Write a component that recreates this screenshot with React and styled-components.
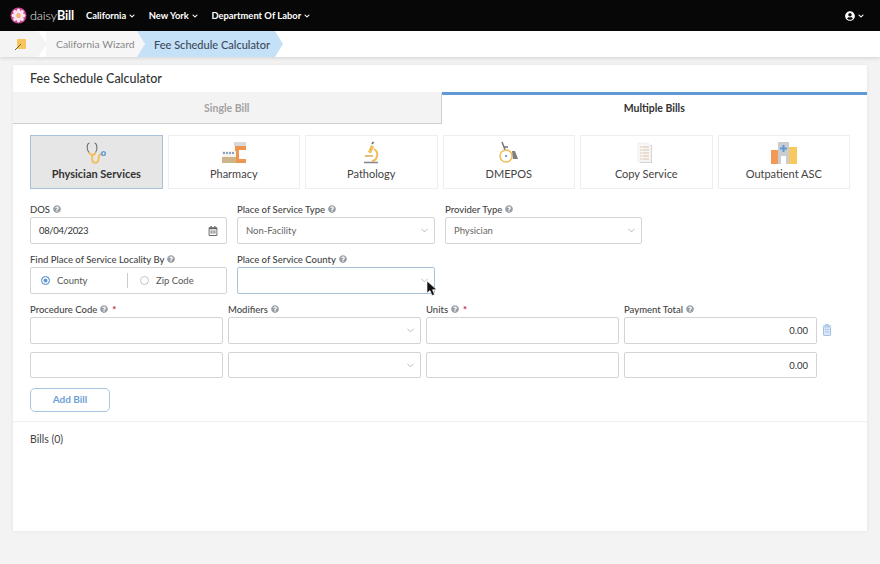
import React from "react";
import styled, { createGlobalStyle } from "styled-components";
import { FaChevronDown, FaUserCircle, FaQuestionCircle, FaRegCalendarAlt } from "react-icons/fa";
import { LuChevronDown } from "react-icons/lu";

const GlobalStyle = createGlobalStyle`
  html, body {
    margin: 0;
    height: 100%;
    overflow: hidden;
    background: #f3f3f3;
    font-family: "Lato", "Open Sans", sans-serif;
    color: #333;
  }
  * { box-sizing: border-box; }
`;

const Page = styled.div`
  width: 880px;
  height: 564px;
  display: flex;
  flex-direction: column;
`;

const TopBar = styled.header`
  height: 31px;
  background: #070707;
  display: flex;
  align-items: center;
  padding: 0 16px 0 10px;
  color: #fff;
`;

const Logo = styled.div`
  display: flex;
  align-items: center;
  gap: 3px;
  width: 76px;
  font-size: 12.6px;
  font-weight: 300;
  letter-spacing: -0.1px;
  color: #e8e8e8;
  b { font-weight: 700; color: #fff; }
`;

const TopMenu = styled.nav`
  display: flex;
  gap: 13.5px;
  flex: 1;
`;

const TopItem = styled.span`
  display: flex;
  align-items: center;
  gap: 3px;
  font-size: 9.4px;
  font-weight: 700;
  white-space: nowrap;
`;

const UserMenu = styled.div`
  display: flex;
  align-items: center;
  gap: 3px;
`;

const Crumbs = styled.div`
  height: 26px;
  background: #fff;
  display: flex;
  align-items: stretch;
  box-shadow: 0 1px 4px rgba(0, 0, 0, 0.14);
`;

const HomeCrumb = styled.div`
  width: 47px;
  background: #f4f4f4;
  display: flex;
  align-items: center;
  padding-left: 14px;
  clip-path: polygon(0 0, 38px 0, 47px 50%, 38px 100%, 0 100%);
`;

const Crumb = styled.div`
  display: flex;
  align-items: center;
  background: #f6f6f6;
  color: #8a8a8a;
  width: 98px;
  padding-left: 10px;
  margin-left: -1px;
  font-size: 10.4px;
`;

const ActiveCrumb = styled.div`
  display: flex;
  align-items: center;
  width: 146px;
  margin-left: -7px;
  padding-left: 17px;
  background: #c4e1f8;
  color: #3d4a58;
  font-size: 11px;
  font-weight: 500;
  clip-path: polygon(0 0, 138px 0, 146px 50%, 138px 100%, 0 100%, 8px 50%);
`;

const Card = styled.main`
  width: 854px;
  height: 466px;
  margin: 8px 0 0 13px;
  background: #fff;
  box-shadow: 0 0 3px rgba(0, 0, 0, 0.08);
  display: flex;
  flex-direction: column;
`;

const CardTitle = styled.h1`
  margin: 0;
  height: 27px;
  padding: 0 17px;
  font-size: 12.5px;
  font-weight: 500;
  line-height: 27px;
  color: #333;
`;

const Tabs = styled.div`
  display: grid;
  grid-template-columns: 428.5px 425.5px;
  height: 32px;
`;

const Tab = styled.div`
  display: flex;
  align-items: center;
  justify-content: center;
  padding-bottom: 3px;
  font-size: 10.5px;
  font-weight: 700;
  color: ${({ $active }) => ($active ? "#333" : "#a2a2a2")};
  background: ${({ $active }) => ($active ? "#fff" : "#f3f3f3")};
  border-top: 3px solid ${({ $active }) => ($active ? "#5f9ad6" : "#f3f3f3")};
  border-bottom: ${({ $active }) => ($active ? "none" : "1px solid #cfcfcf")};
  border-right: ${({ $active }) => ($active ? "none" : "1px solid #cfcfcf")};
`;

const Services = styled.div`
  display: grid;
  grid-template-columns: repeat(6, 1fr);
  gap: 5px;
  padding: 11px 17px 0;
`;

const Service = styled.div`
  height: 54px;
  display: flex;
  flex-direction: column;
  align-items: center;
  padding-top: 5px;
  font-size: 11px;
  font-weight: ${({ $active }) => ($active ? 700 : 400)};
  color: ${({ $active }) => ($active ? "#333" : "#444")};
  background: ${({ $active }) => ($active ? "#e6e6e6" : "#fff")};
  border: 1px solid ${({ $active }) => ($active ? "#a9c0da" : "#eeeeee")};
  svg { height: 24px; display: block; margin-bottom: 2px; }
`;

const Fields = styled.div`
  display: grid;
  grid-template-columns: 197px 198px 197px;
  column-gap: 10px;
  row-gap: 7px;
  padding: 12px 17px 0;
`;

const Lines = styled.div`
  display: grid;
  grid-template-columns: repeat(4, 193px);
  column-gap: 5px;
  row-gap: 8px;
  padding: 7px 17px 0;
  position: relative;
`;

const Field = styled.div`
  display: flex;
  flex-direction: column;
`;

const Label = styled.label`
  height: 16px;
  font-size: 9.5px;
  font-weight: 500;
  color: #444;
  display: flex;
  align-items: center;
  gap: 3px;
  white-space: nowrap;
  svg { color: #9a9fa5; font-size: 8px; }
`;

const Required = styled.span`
  color: #c0263c;
  margin-left: 1px;
  font-weight: 700;
`;

const Box = styled.div`
  position: relative;
  height: ${({ $h }) => $h || 27}px;
  display: flex;
  align-items: center;
  justify-content: ${({ $right }) => ($right ? "flex-end" : "space-between")};
  padding: 0 8px;
  background: #fff;
  border: 1px solid ${({ $focus }) => ($focus ? "#a9c0da" : "#d4d4d4")};
  border-radius: 2px;
  font-size: 9.5px;
  color: ${({ $muted }) => ($muted ? "#666" : "#333")};
  svg.caret { color: #b4b4b4; font-size: 11px; margin-right: -4px; }
`;

const DateText = styled.span`
  letter-spacing: -0.35px;
`;

const Radios = styled.div`
  height: 27px;
  display: grid;
  grid-template-columns: 96px 100px;
  align-items: center;
  border: 1px solid #d4d4d4;
  border-radius: 2px;
  font-size: 9.5px;
  color: #555;
`;

const Radio = styled.span`
  display: flex;
  align-items: center;
  gap: 7px;
  height: 15px;
  padding-left: ${({ $first }) => ($first ? "10px" : "12px")};
  border-left: ${({ $first }) => ($first ? "none" : "1px solid #ccc")};
`;

const Dot = styled.i`
  width: 9px;
  height: 9px;
  border-radius: 50%;
  background: ${({ $on }) => ($on ? "#5f9ad6" : "#fff")};
  border: ${({ $on }) => ($on ? "1px solid #5f9ad6" : "1px solid #c4c4c4")};
  box-shadow: ${({ $on }) => ($on ? "inset 0 0 0 1.5px #fff" : "none")};
`;

const TrashBtn = styled.svg`
  position: absolute;
  left: 809px;
  top: 30px;
`;

const AddRow = styled.div`
  padding: 9px 17px 0;
`;

const AddBill = styled.button`
  width: 80px;
  height: 24px;
  padding: 0 0 2px;
  background: #fff;
  border: 1px solid #a9c4e2;
  border-radius: 5px;
  font: 700 10px "Lato", sans-serif;
  color: #6d9fd6;
`;

const Bills = styled.div`
  margin-top: 9px;
  padding: 11px 17px;
  border-top: 1px solid #f1f1f1;
  font-size: 10.5px;
  color: #444;
`;

const Pointer = styled.svg`
  position: absolute;
  right: -4px;
  top: 12px;
  z-index: 2;
`;

const Help = () => <FaQuestionCircle />;

const LogoMark = () => (
  <svg width="17" height="17" viewBox="0 0 17 17">
    <circle cx="8.5" cy="8.5" r="8" fill="#c9468f" />
    {[0, 45, 90, 135, 180, 225, 270, 315].map((a) => (
      <ellipse key={a} cx="8.5" cy="4.2" rx="1.9" ry="2.6" fill="#fbe3f0" transform={`rotate(${a} 8.5 8.5)`} />
    ))}
    <circle cx="8.5" cy="8.5" r="1.9" fill="#f3c14b" />
  </svg>
);

const WizardIcon = () => (
  <svg width="13" height="13" viewBox="0 0 13 13">
    <rect x="3" y="1" width="9" height="10" rx="1" fill="#f6c65c" />
    <path d="M1 12 L7 6" stroke="#6b5a34" strokeWidth="1" />
  </svg>
);

const Stethoscope = () => (
  <svg viewBox="0 0 32 24" width="32">
    <path d="M9.5 2 C6.5 2.5 6.5 9 9 11.5 M14.5 2 C17.5 2.5 17.5 9 15.5 11.5" fill="none" stroke="#6f7174" strokeWidth="1.1" />
    <path d="M9 11.5 C10 13.5 11 14 12.2 14 C13.5 14 15 13.5 15.5 11.5 M12.2 14 V18.5 C12.2 23 18.5 23 18.5 18.5 C18.5 15 19.5 13 22 12.5" fill="none" stroke="#f2bd56" strokeWidth="1.8" />
    <circle cx="23.5" cy="12.5" r="2.6" fill="#6f9fd6" />
    <circle cx="23.5" cy="12.5" r="0.9" fill="#fff" />
  </svg>
);

const PharmacyIcon = () => (
  <svg viewBox="0 0 26 24" width="26">
    <rect x="13" y="1" width="12" height="4" fill="#d9d9d9" />
    <rect x="14" y="5" width="11" height="17" fill="#ee9550" />
    <rect x="18" y="9" width="7" height="9" fill="#fff" />
    <rect x="1" y="10" width="14" height="12" fill="#f6f3ec" />
    <g fill="#5e87b8">
      <circle cx="3" cy="12" r="1" /><circle cx="6" cy="12" r="1" /><circle cx="9" cy="12" r="1" /><circle cx="12" cy="12" r="1" />
    </g>
    <rect x="1" y="16" width="14" height="6" fill="#cdb489" />
  </svg>
);

const Microscope = () => (
  <svg viewBox="0 0 20 24" width="20">
    <path d="M10 4 L7 11 L10 12.5 L13 5.5 Z" fill="#f2bd56" />
    <path d="M11 3 L12.5 1" stroke="#666" strokeWidth="1.6" />
    <path d="M13 8 C18 11 17 19 11 20" fill="none" stroke="#f2bd56" strokeWidth="2" />
    <path d="M4 15 H12" stroke="#d9a24a" strokeWidth="1.4" />
    <path d="M3 21.5 H17" stroke="#8a8a8a" strokeWidth="1.6" />
  </svg>
);

const Wheelchair = () => (
  <svg viewBox="0 0 24 24" width="24">
    <path d="M5 1 L7 6 H11 M7 6 L9 12" fill="none" stroke="#777" strokeWidth="1.5" />
    <circle cx="9" cy="15" r="6" fill="#fff" stroke="#f2bd56" strokeWidth="1.5" />
    <circle cx="9" cy="15" r="1" fill="#4f7fb8" />
    <path d="M15 10 H18 L21 18 H16 Z" fill="#7e7e7e" />
  </svg>
);

const CopyIcon = () => (
  <svg viewBox="0 0 18 24" width="18">
    <path d="M3 4 H15 V22 H3 Z" fill="#d2d2d2" />
    <path d="M1 2 H11 L14 5 V21 H1 Z" fill="#f7f7f7" stroke="#e3e3e3" strokeWidth="0.5" />
    <path d="M3 6 H12 M3 9 H12 M3 12 H12 M3 15 H12 M3 18 H12" stroke="#d9b99a" strokeWidth="0.9" strokeDasharray="1.5 1 9 0" />
  </svg>
);

const ClinicIcon = () => (
  <svg viewBox="0 0 28 24" width="28">
    <rect x="1" y="9" width="8" height="14" fill="#f09a55" />
    <rect x="18" y="6" width="9" height="17" fill="#f7c85f" />
    <rect x="8" y="1" width="11" height="22" fill="#c9ccd0" />
    <path d="M13.5 4 V11 M10 7.5 H17" stroke="#5f9ad6" strokeWidth="2" />
    <rect x="11" y="15" width="5" height="8" fill="#fff" />
  </svg>
);

const services = [
  { name: "Physician Services", Icon: Stethoscope, active: true },
  { name: "Pharmacy", Icon: PharmacyIcon },
  { name: "Pathology", Icon: Microscope },
  { name: "DMEPOS", Icon: Wheelchair },
  { name: "Copy Service", Icon: CopyIcon },
  { name: "Outpatient ASC", Icon: ClinicIcon },
];

const menu = ["California", "New York", "Department Of Labor"];

export default function App() {
  return (
    <Page>
      <GlobalStyle />
      <TopBar>
        <Logo>
          <LogoMark />
          <span>daisy<b>Bill</b></span>
        </Logo>
        <TopMenu>
          {menu.map((m) => (
            <TopItem key={m}>
              {m} <FaChevronDown size={6} />
            </TopItem>
          ))}
        </TopMenu>
        <UserMenu>
          <FaUserCircle size={10} />
          <FaChevronDown size={6} />
        </UserMenu>
      </TopBar>

      <Crumbs>
        <HomeCrumb>
          <WizardIcon />
        </HomeCrumb>
        <Crumb>California Wizard</Crumb>
        <ActiveCrumb>Fee Schedule Calculator</ActiveCrumb>
      </Crumbs>

      <Card>
        <CardTitle>Fee Schedule Calculator</CardTitle>
        <Tabs>
          <Tab>Single Bill</Tab>
          <Tab $active>Multiple Bills</Tab>
        </Tabs>

        <Services>
          {services.map(({ name, Icon, active }) => (
            <Service key={name} $active={active}>
              <Icon />
              {name}
            </Service>
          ))}
        </Services>

        <Fields>
          <Field>
            <Label>DOS <Help /></Label>
            <Box>
              <DateText>08/04/2023</DateText>
              <FaRegCalendarAlt size={10} color="#666" />
            </Box>
          </Field>
          <Field>
            <Label>Place of Service Type <Help /></Label>
            <Box $muted>
              Non-Facility
              <LuChevronDown className="caret" />
            </Box>
          </Field>
          <Field>
            <Label>Provider Type <Help /></Label>
            <Box $muted>
              Physician
              <LuChevronDown className="caret" />
            </Box>
          </Field>
          <Field>
            <Label>Find Place of Service Locality By <Help /></Label>
            <Radios>
              <Radio $first><Dot $on /> County</Radio>
              <Radio><Dot /> Zip Code</Radio>
            </Radios>
          </Field>
          <Field>
            <Label>Place of Service County <Help /></Label>
            <Box $focus>
              <span />
              <LuChevronDown className="caret" />
              <Pointer width="12" height="17" viewBox="0 0 12 17">
                <path d="M1 1 V13 L4 10.5 L6 15.5 L8.5 14.5 L6.5 9.8 L10.5 9.5 Z" fill="#111" stroke="#fff" strokeWidth="0.6" />
              </Pointer>
            </Box>
          </Field>
        </Fields>

        <Lines>
          <TrashBtn width="10" height="12" viewBox="0 0 10 13">
            <path d="M3.5 1.5 V0.6 H6.5 V1.5 M0.5 2 H9.5" fill="none" stroke="#8db3e0" strokeWidth="0.9" />
            <rect x="1.2" y="3" width="7.6" height="9.4" rx="0.8" fill="#dbe7f6" stroke="#8db3e0" strokeWidth="0.9" />
            <path d="M3 6 H7 M3 8.5 H7" stroke="#8db3e0" strokeWidth="0.7" />
          </TrashBtn>
          <Field>
            <Label>Procedure Code <Help /><Required>*</Required></Label>
            <Box />
          </Field>
          <Field>
            <Label>Modifiers <Help /></Label>
            <Box>
              <span />
              <LuChevronDown className="caret" />
            </Box>
          </Field>
          <Field>
            <Label>Units <Help /><Required>*</Required></Label>
            <Box />
          </Field>
          <Field>
            <Label>Payment Total <Help /></Label>
            <Box $right>0.00</Box>
          </Field>
          <Box $h={26} />
          <Box $h={26}>
            <span />
            <LuChevronDown className="caret" />
          </Box>
          <Box $h={26} />
          <Box $h={26} $right>0.00</Box>
        </Lines>

        <AddRow>
          <AddBill>Add Bill</AddBill>
        </AddRow>
        <Bills>Bills (0)</Bills>
      </Card>
    </Page>
  );
}
